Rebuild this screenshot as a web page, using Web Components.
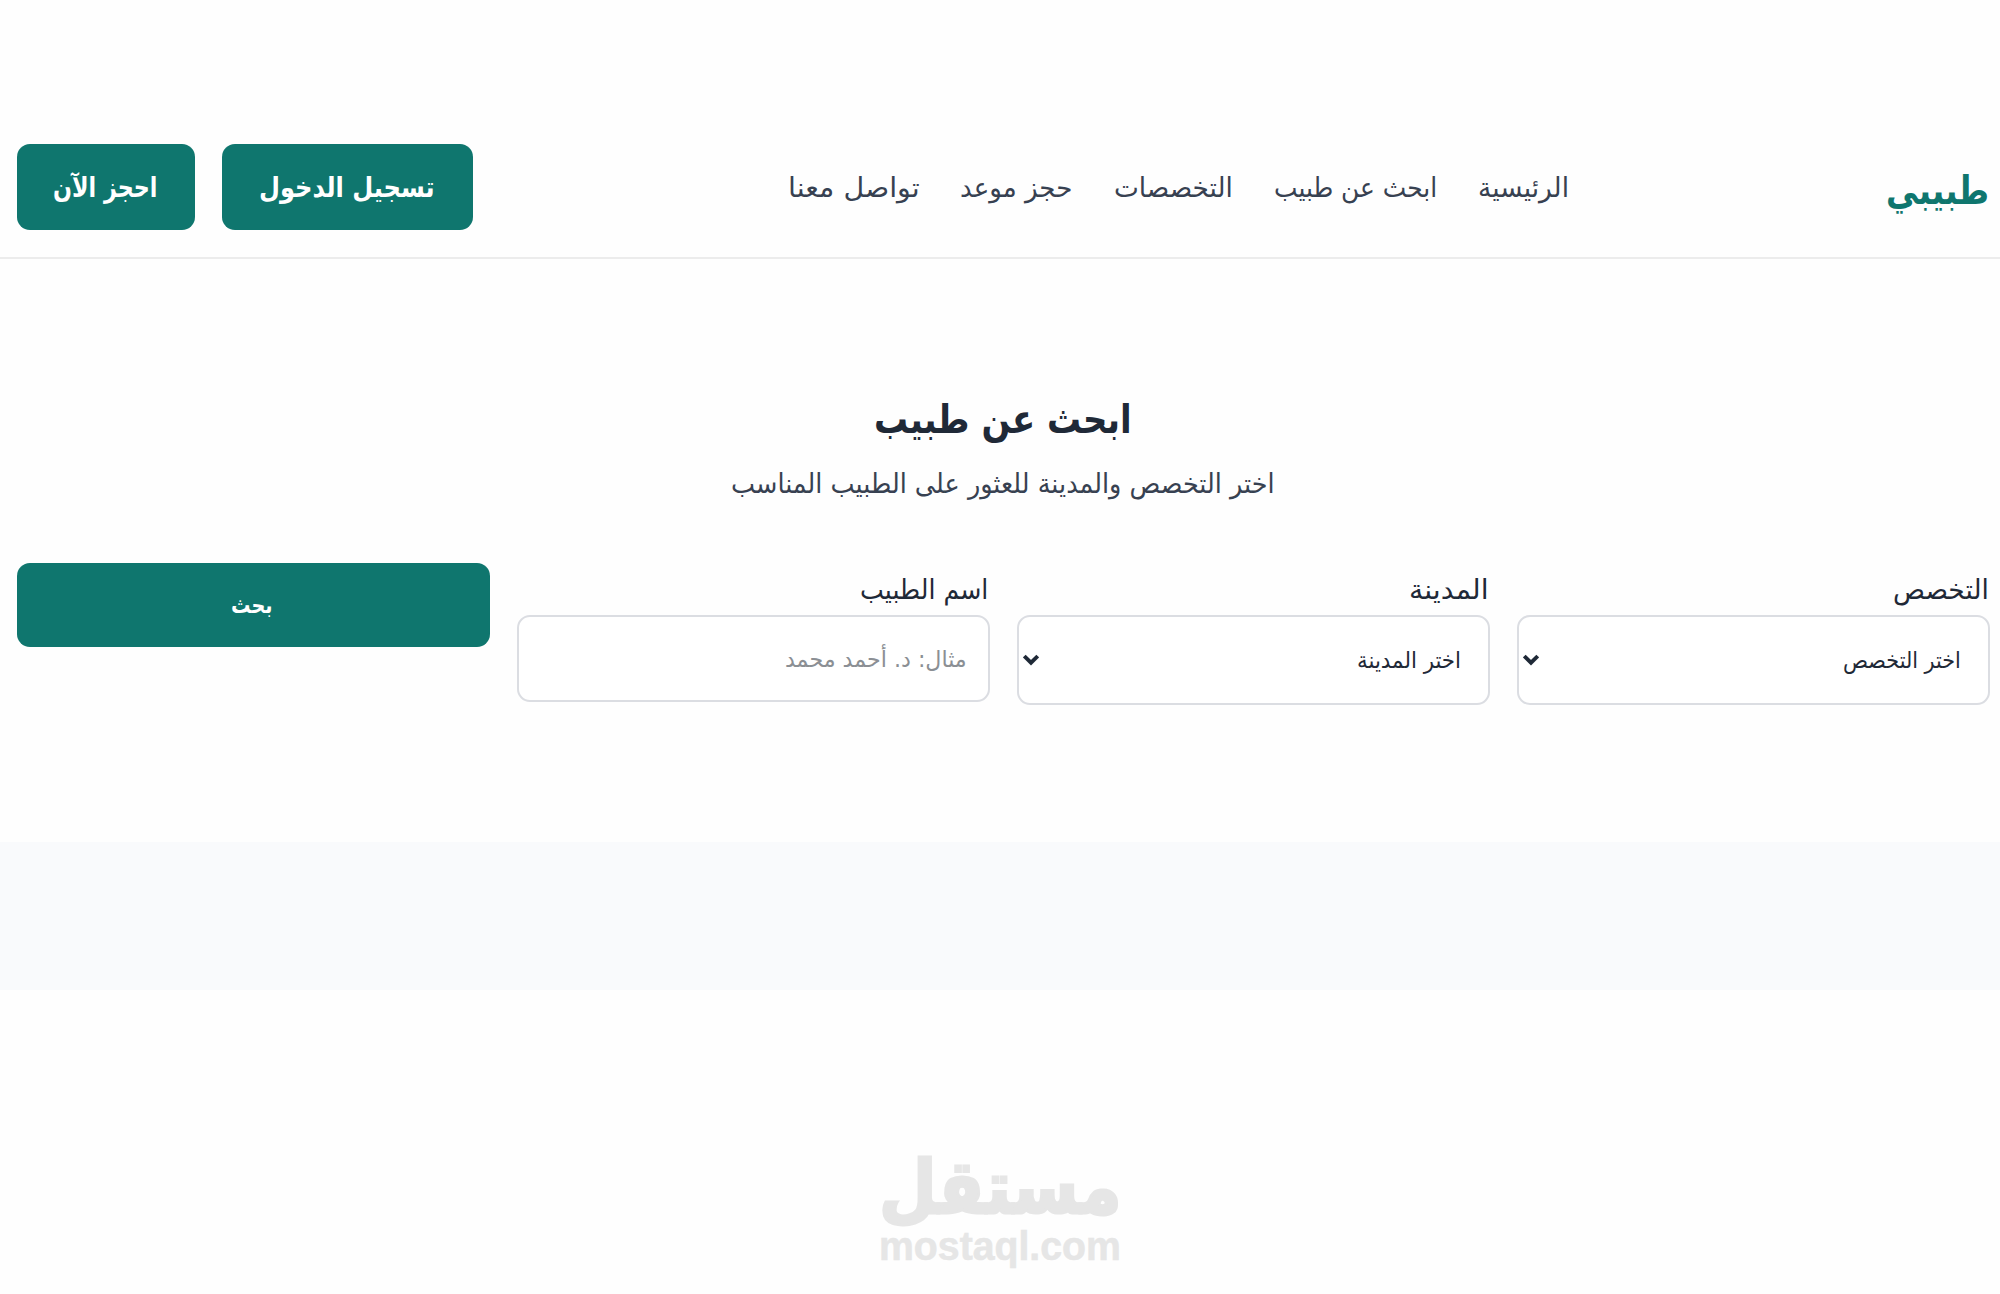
<!DOCTYPE html>
<html lang="ar" dir="rtl">
<head>
<meta charset="utf-8">
<title>طبيبي</title>
<style>
  body {
    margin: 0;
    background: #fefefe;
    color: #1f2937;
    font-family: "DejaVu Sans", sans-serif;
  }
</style>
</head>
<body>
<doctor-page></doctor-page>

<script>
// keeps a line of text at a given width
class FitText extends HTMLElement {
  constructor(){
    super();
    this.attachShadow({mode:"open"});
    this.shadowRoot.innerHTML = `
      <style>
        :host { display: block; flex: none; white-space: nowrap; direction: rtl; }
        span { display: inline-block; transform-origin: right center; }
      </style>
      <span><slot></slot></span>
    `;
  }

  connectedCallback(){
    const width = Number(this.getAttribute("width"));
    const span = this.shadowRoot.querySelector("span");
    this.style.width = width + "px";
    span.style.transform = `scaleX(${width / span.offsetWidth})`;
  }
}

class MainButton extends HTMLElement {
  constructor(){
    super();
    this.attachShadow({mode:"open"});
    this.shadowRoot.innerHTML = `
      <style>
        :host {
          display: flex;
          align-items: center;
          justify-content: center;
          box-sizing: border-box;
          height: 86px;
          padding: 2px 1px 0 0;
          border-radius: 13px;
          background: #0f766e;
          color: #fff;
          font-size: 28px;
          font-weight: bold;
          line-height: 40px;
        }
      </style>
      <slot></slot>
    `;
  }
}

class SiteHeader extends HTMLElement {
  constructor(){
    super();
    this.attachShadow({mode:"open"});
    this.shadowRoot.innerHTML = `
      <style>
        :host {
          display: flex;
          align-items: center;
          justify-content: space-between;
          box-sizing: border-box;
          height: 259px;
          padding: 144px 11px 27px 17px;
          border-bottom: 2px solid #ececec;
        }
        .logo {
          padding-top: 8px;
          color: #0f766e;
          font-size: 39px;
          font-weight: bold;
          line-height: 50px;
        }
        nav {
          display: flex;
          gap: 41px;
          padding: 2px 2px 0 0;
          color: #374151;
          font-size: 27px;
          line-height: 40px;
        }
        .actions { display: flex; gap: 27px; }
        .login { width: 250.5px; }
        .book { width: 178px; }
      </style>
      <fit-text class="logo" width="103">طبيبي</fit-text>
      <nav>
        <fit-text width="91">الرئيسية</fit-text>
        <fit-text width="163">ابحث عن طبيب</fit-text>
        <fit-text width="119">التخصصات</fit-text>
        <fit-text width="112">حجز موعد</fit-text>
        <fit-text width="132">تواصل معنا</fit-text>
      </nav>
      <div class="actions">
        <main-button class="login"><fit-text width="176">تسجيل الدخول</fit-text></main-button>
        <main-button class="book"><fit-text width="104">احجز الآن</fit-text></main-button>
      </div>
    `;
  }
}

class FormField extends HTMLElement {
  constructor(){
    super();
    this.attachShadow({mode:"open"});
    this.shadowRoot.innerHTML = `
      <style>
        :host { display: block; }
        .label {
          display: flex;
          height: 45px;
          padding: 7px 1px 0 0;
          font-size: 27px;
          line-height: 40px;
        }
        .box {
          display: flex;
          align-items: center;
          justify-content: space-between;
          box-sizing: border-box;
          height: 87px;
          padding: 0 21px 0 4px;
          border: 2px solid #dbdde2;
          border-radius: 13px;
          background: #fff;
          color: #8b8f94;
          font-size: 23px;
          line-height: 34px;
        }
        svg { display: none; }
        :host([select]) .box { height: 90px; padding-right: 27px; color: #1f2937; }
        :host([select]) svg { display: block; }
      </style>
      <div class="label"><slot name="label"></slot></div>
      <div class="box">
        <slot></slot>
        <svg width="16" height="12" viewBox="0 0 16 12" fill="none" stroke="#1f2937" stroke-width="3.8">
          <path d="M1.3 2 L8 8.7 L14.7 2"/>
        </svg>
      </div>
    `;
  }
}

class DoctorSearch extends HTMLElement {
  constructor(){
    super();
    this.attachShadow({mode:"open"});
    this.shadowRoot.innerHTML = `
      <style>
        :host {
          display: block;
          box-sizing: border-box;
          height: 583px;
          padding: 130px 10.5px 0 17px;
        }
        .head { display: flex; flex-direction: column; align-items: center; padding-right: 2px; }
        .title { font-size: 40px; font-weight: bold; line-height: 60px; }
        .sub { font-size: 27px; line-height: 40px; margin-top: 15px; color: #374151; }
        .fields {
          display: grid;
          grid-template-columns: repeat(4, 1fr);
          gap: 27.5px;
          align-items: start;
          margin-top: 59px;
        }
        main-button { height: 84px; padding: 0 3px 0 0; font-size: 23px; }
      </style>
      <div class="head">
        <fit-text class="title" width="258">ابحث عن طبيب</fit-text>
        <fit-text class="sub" width="544">اختر التخصص والمدينة للعثور على الطبيب المناسب</fit-text>
      </div>
      <div class="fields">
        <form-field select>
          <fit-text slot="label" width="96">التخصص</fit-text>
          <fit-text width="118">اختر التخصص</fit-text>
        </form-field>
        <form-field select>
          <fit-text slot="label" width="80">المدينة</fit-text>
          <fit-text width="104">اختر المدينة</fit-text>
        </form-field>
        <form-field>
          <fit-text slot="label" width="128">اسم الطبيب</fit-text>
          <fit-text width="182">مثال: د. أحمد محمد</fit-text>
        </form-field>
        <main-button><fit-text width="42">بحث</fit-text></main-button>
      </div>
    `;
  }
}

class MostaqlMark extends HTMLElement {
  constructor(){
    super();
    this.attachShadow({mode:"open"});
    this.shadowRoot.innerHTML = `
      <style>
        :host {
          display: flex;
          flex-direction: column;
          align-items: center;
          padding-top: 162px;
          color: #e6e6e6;
          font-weight: bold;
        }
        .name { font-size: 74px; line-height: 71px; -webkit-text-stroke: 3px #e6e6e6; }
        .site {
          font-family: "Liberation Sans", sans-serif;
          font-size: 41px;
          line-height: 46px;
          -webkit-text-stroke: 0.6px #e6e6e6;
        }
      </style>
      <fit-text class="name" width="243">مستقل</fit-text>
      <fit-text class="site" width="242">mostaql.com</fit-text>
    `;
  }
}

class DoctorPage extends HTMLElement {
  constructor(){
    super();
    this.attachShadow({mode:"open"});
    this.shadowRoot.innerHTML = `
      <style>
        :host { display: block; height: 1294px; overflow: hidden; }
        .band { height: 148px; background: #f9fafc; }
      </style>
      <site-header></site-header>
      <doctor-search></doctor-search>
      <div class="band"></div>
      <mostaql-mark></mostaql-mark>
    `;
  }
}

window.customElements.define("fit-text", FitText);
window.customElements.define("main-button", MainButton);
window.customElements.define("form-field", FormField);
window.customElements.define("site-header", SiteHeader);
window.customElements.define("doctor-search", DoctorSearch);
window.customElements.define("mostaql-mark", MostaqlMark);
window.customElements.define("doctor-page", DoctorPage);
</script>
</body>
</html>
